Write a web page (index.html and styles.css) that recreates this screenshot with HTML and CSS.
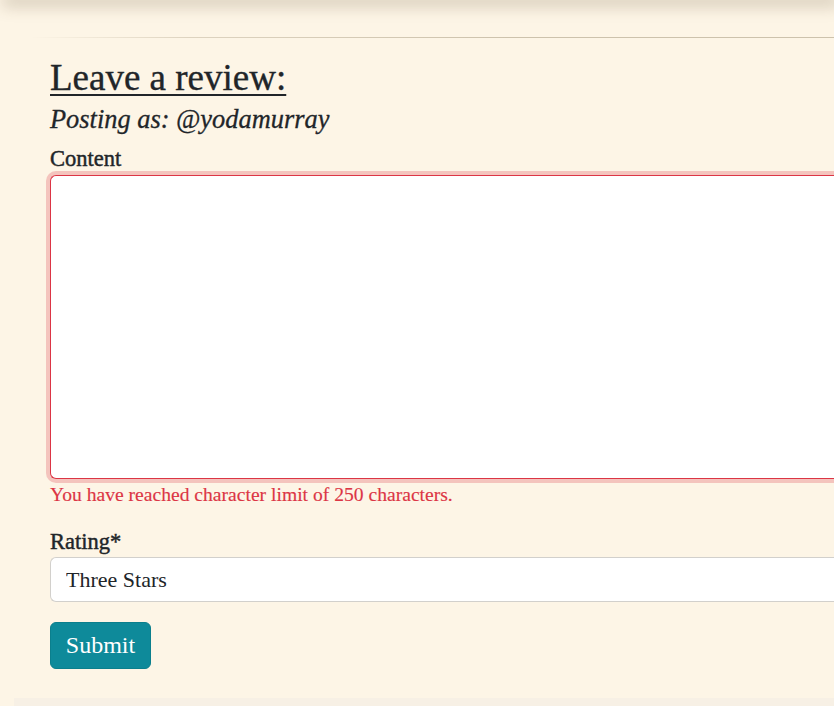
FILE: index.html
```html
<!DOCTYPE html>
<html lang="en">
<head>
<meta charset="utf-8">
<title>Leave a review</title>
<link rel="stylesheet" href="styles.css">
</head>
<body>
<div class="topbar"></div>
<main class="page">
  <div class="rule"></div>
  <section class="review">
    <h1 class="review-title">Leave a review:</h1>
    <h3 class="posting">Posting as: @yodamurray</h3>
    <form class="review-form">
      <label class="field-label" for="content">Content</label>
      <textarea id="content" class="field-textarea is-invalid"></textarea>
      <div class="invalid-feedback">You have reached character limit of 250 characters.</div>
      <label class="field-label label-rating" for="rating">Rating*</label>
      <select id="rating" class="field-select">
        <option>Three Stars</option>
      </select>
      <button type="button" class="btn-submit">Submit</button>
    </form>
  </section>
  <div class="footer-band"></div>
</main>
</body>
</html>
```
FILE: styles.css
```css
html, body {
  margin: 0;
  padding: 0;
  overflow: hidden;
  height: 706px;
}
body {
  background: #fdf5e6;
  color: #212529;
  font-family: "Liberation Serif", "Times New Roman", serif;
}
.topbar {
  height: 0;
  margin-left: 8px;
  box-shadow: 0 0 16px 6px rgba(90, 70, 40, 0.26);
}
.page {
  width: 100%;
}
.rule {
  margin-top: 37px;
  margin-left: 30px;
  height: 1px;
  background: linear-gradient(to right, rgba(200, 188, 165, 0), rgba(200, 188, 165, 0.6) 20%, #cdc2ac 60%);
}
.review {
  padding-left: 50px;
  display: flex;
  flex-direction: column;
}
.review-title {
  margin: 18px 0 0;
  font-size: 37px;
  line-height: 44px;
  font-weight: 400;
  text-decoration: underline;
  text-decoration-thickness: 2px;
  text-underline-offset: 4px;
  -webkit-text-stroke: 0.35px #212529;
}
.posting {
  margin: 3px 0 0;
  font-size: 26.4px;
  line-height: 32px;
  font-style: italic;
  font-weight: 400;
  -webkit-text-stroke: 0.3px #212529;
}
.review-form {
  display: flex;
  flex-direction: column;
  align-items: stretch;
  margin-top: 11px;
}
.field-label {
  align-self: flex-start;
  font-size: 22.5px;
  line-height: 26px;
  -webkit-text-stroke: 0.45px #212529;
}
.field-textarea {
  box-sizing: border-box;
  margin-top: 3px;
  height: 304px;
  border: 1px solid #dc3545;
  border-right: none;
  border-radius: 6px 0 0 6px;
  background: #fff;
  box-shadow: 0 0 0 4px rgba(220, 53, 69, 0.25);
  outline: none;
  resize: none;
}
.invalid-feedback {
  margin-top: 4px;
  color: #dc3545;
  font-size: 19.6px;
  line-height: 24px;
  -webkit-text-stroke: 0.15px #dc3545;
}
.label-rating {
  margin-top: 22px;
}
.field-select {
  box-sizing: border-box;
  margin-top: 2px;
  height: 45px;
  padding: 0 0 0 15px;
  border: 1px solid #d2d0cc;
  border-right: none;
  border-radius: 6px 0 0 6px;
  background: #fff;
  color: #212529;
  font-family: "Liberation Serif", "Times New Roman", serif;
  font-size: 22px;
  appearance: none;
  -webkit-appearance: none;
}
.btn-submit {
  align-self: flex-start;
  margin-top: 20px;
  width: 101px;
  height: 47px;
  padding: 0;
  border: 1px solid #0b7f8d;
  border-radius: 6px;
  background: #0e8a9a;
  color: #fff;
  font-family: "Liberation Serif", "Times New Roman", serif;
  font-size: 24px;
}
.footer-band {
  margin-top: 29px;
  margin-left: 14px;
  height: 20px;
  background: #f7f0e5;
}
```
